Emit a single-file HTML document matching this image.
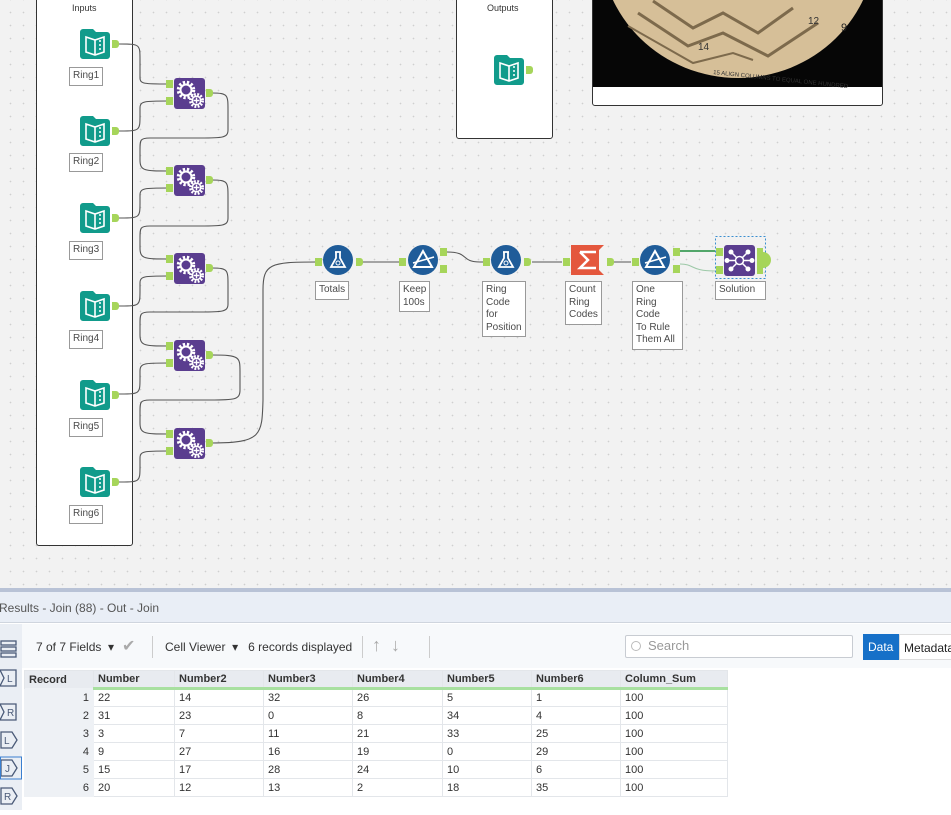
<!DOCTYPE html>
<html><head><meta charset="utf-8"><style>
*{margin:0;padding:0;box-sizing:border-box}
body{width:951px;height:810px;overflow:hidden;background:#fff;font-family:"Liberation Sans",sans-serif;position:relative}
#cv{position:absolute;left:0;top:0;width:951px;height:588px;background-color:#f2f2f2;background-image:radial-gradient(circle,#cfcfcf 0.7px,transparent 0.9px);background-size:13px 13px;background-position:4px 6px}
.box{position:absolute;border:1px solid #333;border-radius:3px;background:#fff}
.lbl{position:absolute;border:1px solid #999;background:#fff;font-size:10px;color:#4a4a4a;padding:2px 3px;line-height:12.5px}
.res{position:absolute;left:0;top:588px;width:951px;height:4px;background:#b8c2d6}
.hdr{position:absolute;left:0;top:592px;width:951px;height:31px;background:#e9eef6;border-bottom:1px solid #cfd5de;font-size:12px;color:#555;padding:9px 0 0 0;text-indent:-1px}
.side{position:absolute;left:0;top:624px;width:22px;height:186px;background:#eaeef4}
.tb{position:absolute;left:22px;top:624px;width:929px;height:44px;background:#f7f9fb;font-size:12px;color:#333}
table{position:absolute;left:24px;top:670px;border-collapse:collapse;font-size:11px;color:#333}
td,th{height:18px;padding:0 4px;text-align:left;border:1px solid #e3e6ea}
th{background:#e8ebf0;font-weight:bold;color:#333;border-bottom:3px solid #a8e0a0}
td.r{background:#eef1f5;text-align:right;border-color:#eef1f5}
</style></head><body>
<div id="cv"></div>
<div class="box" style="left:36px;top:-3px;width:97px;height:549px"></div>
<div style="position:absolute;left:72px;top:3px;font-size:9px;color:#333">Inputs</div>
<div class="box" style="left:456px;top:-3px;width:97px;height:142px"></div>
<div style="position:absolute;left:487px;top:3px;font-size:9px;color:#333">Outputs</div>
<div style="position:absolute;left:592px;top:-3px;width:291px;height:109px;border:1px solid #333;border-radius:3px;background:#fff;overflow:hidden">
<svg width="291" height="90" style="display:block"><rect width="291" height="89" fill="#060606"/>
<ellipse cx="145" cy="-55" rx="138" ry="135" fill="#d6bf98"/>
<path d="M60 3 L100 30 L130 15 L165 35 L200 10" stroke="#7d6a4c" stroke-width="3" fill="none"/>
<path d="M45 15 L95 48 L130 35 L175 58 L225 25" stroke="#7d6a4c" stroke-width="3" fill="none"/>
<path d="M35 28 L100 65 L140 55 L160 62" stroke="#7d6a4c" stroke-width="2" fill="none"/>
<text x="120" y="76" font-size="6" fill="#333" transform="rotate(6 120 76)">15 ALIGN COLUMNS TO EQUAL ONE HUNDRED</text>
<text x="248" y="33" font-size="11" fill="#222">9</text><text x="105" y="52" font-size="10" fill="#333">14</text><text x="215" y="26" font-size="10" fill="#333">12</text></svg></div>

<svg width="951" height="588" style="position:absolute;left:0;top:0">
<defs>
<g id="book"><path d="M3 0h10l3 3h11a3 3 0 0 1 3 3v21a3 3 0 0 1-3 3h-24a3 3 0 0 1-3-3v-24a3 3 0 0 1 3-3z" fill="#119b8b"/>
<path d="M6 8v15l9 3 9-3V8l-9 3z M15 11v15" stroke="#fff" stroke-width="1.6" fill="none"/><circle cx="20" cy="12" r="1" fill="#fff"/><circle cx="20" cy="16" r="1" fill="#fff"/><circle cx="20" cy="20" r="1" fill="#fff"/></g>
<g id="anc"><path d="M0 0h4a3 3 0 0 1 3 3v2a3 3 0 0 1-3 3h-4z" fill="#a6d55a"/></g>
<g id="inA"><rect width="7" height="8" fill="#a6d55a"/></g>
<g id="gear"><rect width="31" height="31" rx="3" fill="#5a3d8f"/>
<circle cx="12" cy="12" r="7.5" fill="none" stroke="#fff" stroke-width="3.5" stroke-dasharray="2.2 1.8"/><circle cx="12" cy="12" r="5.5" fill="none" stroke="#fff" stroke-width="2"/>
<circle cx="22.5" cy="22.5" r="6" fill="#5a3d8f" stroke="#fff" stroke-width="3" stroke-dasharray="1.8 1.4"/><circle cx="22.5" cy="22.5" r="4.2" fill="none" stroke="#fff" stroke-width="1.5"/><path d="M22.5 19.5v6M19.5 22.5h6" stroke="#fff" stroke-width="1.4"/></g>
<g id="flask"><circle cx="15" cy="15" r="15" fill="#1f5c99"/><path d="M12 7h6M13 7v6l-5 9h14l-5-9V7" stroke="#fff" stroke-width="1.8" fill="none"/><circle cx="15" cy="18" r="2" fill="none" stroke="#fff"/></g>
<g id="filt"><circle cx="15" cy="15" r="15" fill="#1f5c99"/><path d="M15 6L6 22h18z" stroke="#fff" stroke-width="2" fill="none"/><path d="M5 18l21-6" stroke="#fff" stroke-width="1.5"/></g>
</defs>
<g stroke="#555" stroke-width="1.1" fill="none">
<path d="M119 44 C140 44 140 44 140 60 V78 C140 84 145 84 168 84"/>
<path d="M119 131 C140 131 140 131 140 115 V108 C140 101 145 101 168 101"/>
<path d="M212 93 C228 93 228 95 228 110 V130 C228 138 222 138 200 138 H150 C140 138 140 140 140 150 V160 C140 171 145 171 168 171"/>
<path d="M119 218 C140 218 140 218 140 202 V195 C140 188 145 188 168 188"/>
<path d="M212 180 C228 180 228 182 228 197 V218 C228 226 222 226 200 226 H150 C140 226 140 228 140 238 V248 C140 259 145 259 168 259"/>
<path d="M119 306 C140 306 140 306 140 290 V283 C140 276 145 276 168 276"/>
<path d="M212 268 C228 268 228 270 228 285 V304 C228 312 222 312 200 312 H150 C140 312 140 314 140 324 V335 C140 346 145 346 168 346"/>
<path d="M119 394 C140 394 140 394 140 378 V371 C140 363 145 363 168 363"/>
<path d="M212 355 C240 355 240 357 240 372 V390 C240 400 234 400 210 400 H150 C140 400 140 402 140 412 V423 C140 434 145 434 168 434"/>
<path d="M119 482 C140 482 140 482 140 466 V458 C140 451 145 451 168 451"/>
<path d="M212 443 C262 443 262 435 263 400 V290 C263 264 270 262 316 262"/>
<path d="M362 262 H399"/>
<path d="M447 252 C470 252 460 262 480 262 H483"/>
<path d="M532 262 H562"/>
<path d="M614 262 H631"/>
<path d="M680 264 C695 264 690 271 715 271" stroke="#9dc9a8"/>
</g>
<path d="M680 251 H715" stroke="#1c8c3c" stroke-width="1.5"/>
<use href="#book" x="80" y="29"/><use href="#anc" x="112" y="40"/>
<use href="#book" x="80" y="116"/><use href="#anc" x="112" y="127"/>
<use href="#book" x="80" y="203"/><use href="#anc" x="112" y="214"/>
<use href="#book" x="80" y="291"/><use href="#anc" x="112" y="302"/>
<use href="#book" x="80" y="380"/><use href="#anc" x="112" y="391"/>
<use href="#book" x="80" y="467"/><use href="#anc" x="112" y="478"/>
<use href="#book" x="494" y="55"/><use href="#anc" x="526" y="66"/>
<g>
<g><use href="#gear" x="174" y="78"/><use href="#inA" x="166" y="80"/><use href="#inA" x="166" y="97"/><use href="#anc" x="206" y="89"/></g>
<g><use href="#gear" x="174" y="165"/><use href="#inA" x="166" y="167"/><use href="#inA" x="166" y="184"/><use href="#anc" x="206" y="176"/></g>
<g><use href="#gear" x="174" y="253"/><use href="#inA" x="166" y="255"/><use href="#inA" x="166" y="272"/><use href="#anc" x="206" y="264"/></g>
<g><use href="#gear" x="174" y="340"/><use href="#inA" x="166" y="342"/><use href="#inA" x="166" y="359"/><use href="#anc" x="206" y="351"/></g>
<g><use href="#gear" x="174" y="428"/><use href="#inA" x="166" y="430"/><use href="#inA" x="166" y="447"/><use href="#anc" x="206" y="439"/></g>
</g>
<use href="#inA" x="315" y="258"/><use href="#flask" x="323" y="245"/><use href="#anc" x="356" y="258"/>
<use href="#inA" x="399" y="258"/><use href="#filt" x="408" y="245"/><use href="#inA" x="440" y="248"/><use href="#inA" x="440" y="265"/>
<use href="#inA" x="483" y="258"/><use href="#flask" x="491" y="245"/><use href="#anc" x="524" y="258"/>
<use href="#inA" x="563" y="258"/>
<path d="M571 245h33l-5 5v20l5 5h-33z" fill="#e4573d"/><path d="M580 252h16M580 252l8 8-8 8h16" stroke="#fff" stroke-width="2.5" fill="none"/>
<use href="#anc" x="607" y="258"/>
<use href="#inA" x="632" y="258"/><use href="#filt" x="640" y="245"/><use href="#inA" x="673" y="248"/><use href="#inA" x="673" y="265"/>
<rect x="715.5" y="236.5" width="50" height="42" fill="none" stroke="#3a8fd0" stroke-dasharray="2 2"/>
<use href="#inA" x="716" y="248"/><use href="#inA" x="716" y="266"/>
<rect x="724" y="245" width="31" height="31" rx="3" fill="#5a3d8f"/>
<g stroke="#fff" stroke-width="1.5"><path d="M731 252L748 269M748 252L731 269M727 260.5H752"/></g>
<g fill="#fff"><circle cx="739.5" cy="260.5" r="4" fill="#5a3d8f" stroke="#fff" stroke-width="1.5"/><circle cx="731" cy="252" r="2.5"/><circle cx="748" cy="252" r="2.5"/><circle cx="731" cy="269" r="2.5"/><circle cx="748" cy="269" r="2.5"/><circle cx="727" cy="260.5" r="2.5"/><circle cx="752" cy="260.5" r="2.5"/></g>
<rect x="757" y="248" width="6" height="8" fill="#a6d55a"/><rect x="757" y="266" width="6" height="8" fill="#a6d55a"/><path d="M757 252h6a7 7 0 0 1 0 16h-6z" fill="#a6d55a"/>
</svg>
<div class="lbl" style="left:69px;top:67px">Ring1</div>
<div class="lbl" style="left:69px;top:153px">Ring2</div>
<div class="lbl" style="left:69px;top:241px">Ring3</div>
<div class="lbl" style="left:69px;top:330px">Ring4</div>
<div class="lbl" style="left:69px;top:418px">Ring5</div>
<div class="lbl" style="left:69px;top:505px">Ring6</div>
<div class="lbl" style="left:315px;top:281px">Totals</div>
<div class="lbl" style="left:399px;top:281px">Keep<br>100s</div>
<div class="lbl" style="left:482px;top:281px;width:44px">Ring<br>Code<br>for<br>Position</div>
<div class="lbl" style="left:565px;top:281px">Count<br>Ring<br>Codes</div>
<div class="lbl" style="left:632px;top:281px;width:51px">One<br>Ring<br>Code<br>To Rule<br>Them All</div>
<div class="lbl" style="left:715px;top:281px;width:51px">Solution</div>

<div class="res"></div>
<div class="hdr">Results - Join (88) - Out - Join</div>
<div class="side">
<svg width="22" height="186"><g fill="none" stroke="#4a5a78" stroke-width="1.3">
<rect x="1" y="17" width="15" height="4"/><rect x="1" y="23" width="15" height="4"/><rect x="1" y="29" width="15" height="4"/>
<path d="M0 46h16v16h-16l4-8z"/><path d="M0 80h16v16h-16l4-8z"/>
<path d="M1 108h11l5 8-5 8h-11z"/><path d="M1 136h11l5 8-5 8h-11z"/><path d="M1 164h11l5 8-5 8h-11z"/></g>
<rect x="0.5" y="133" width="21" height="22" fill="none" stroke="#3a7fd0"/>
<g font-size="10" fill="#4a5a78"><text x="7" y="58">L</text><text x="7" y="92">R</text><text x="4" y="120">L</text><text x="5" y="148">J</text><text x="4" y="176">R</text></g></svg>
</div>
<div class="tb">
<span style="position:absolute;left:14px;top:16px">7 of 7 Fields &nbsp;▾</span>
<span style="position:absolute;left:100px;top:12px;font-size:16px;color:#aaa">✔</span>
<div style="position:absolute;left:130px;top:12px;width:1px;height:22px;background:#ccc"></div>
<span style="position:absolute;left:143px;top:16px">Cell Viewer &nbsp;▾ &nbsp; 6 records displayed</span>
<div style="position:absolute;left:340px;top:12px;width:1px;height:22px;background:#ccc"></div>
<span style="position:absolute;left:350px;top:11px;width:50px;height:22px;font-size:18px;font-weight:bold;color:#aaa">↑ &nbsp;↓</span>
<div style="position:absolute;left:407px;top:12px;width:1px;height:22px;background:#ccc"></div>
<div style="position:absolute;left:603px;top:11px;width:228px;height:23px;border:1px solid #c8ccd2;border-radius:2px;background:#fff;color:#999;font-size:13px;padding:2px 0 0 22px">Search<span style="position:absolute;left:5px;top:5px;width:10px;height:10px;border:1px solid #bbb;border-radius:50%"></span></div>
<div style="position:absolute;left:841px;top:10px;width:36px;height:26px;background:#1670c8;color:#fff;font-size:12px;padding:6px 0 0 5px">Data</div>
<div style="position:absolute;left:877px;top:10px;width:60px;height:26px;background:#fff;color:#222;font-size:12px;padding:6px 0 0 4px;border:1px solid #ddd">Metadata</div>
</div>
<table>
<tr><th style="width:69px;background:#e8ebf0;border-bottom:0">Record</th><th style="width:81px">Number</th><th style="width:89px">Number2</th><th style="width:89px">Number3</th><th style="width:90px">Number4</th><th style="width:89px">Number5</th><th style="width:89px">Number6</th><th style="width:107px">Column_Sum</th></tr>
<tr><td class="r">1</td><td>22</td><td>14</td><td>32</td><td>26</td><td>5</td><td>1</td><td>100</td></tr>
<tr><td class="r">2</td><td>31</td><td>23</td><td>0</td><td>8</td><td>34</td><td>4</td><td>100</td></tr>
<tr><td class="r">3</td><td>3</td><td>7</td><td>11</td><td>21</td><td>33</td><td>25</td><td>100</td></tr>
<tr><td class="r">4</td><td>9</td><td>27</td><td>16</td><td>19</td><td>0</td><td>29</td><td>100</td></tr>
<tr><td class="r">5</td><td>15</td><td>17</td><td>28</td><td>24</td><td>10</td><td>6</td><td>100</td></tr>
<tr><td class="r">6</td><td>20</td><td>12</td><td>13</td><td>2</td><td>18</td><td>35</td><td>100</td></tr>
</table>
</body></html>
